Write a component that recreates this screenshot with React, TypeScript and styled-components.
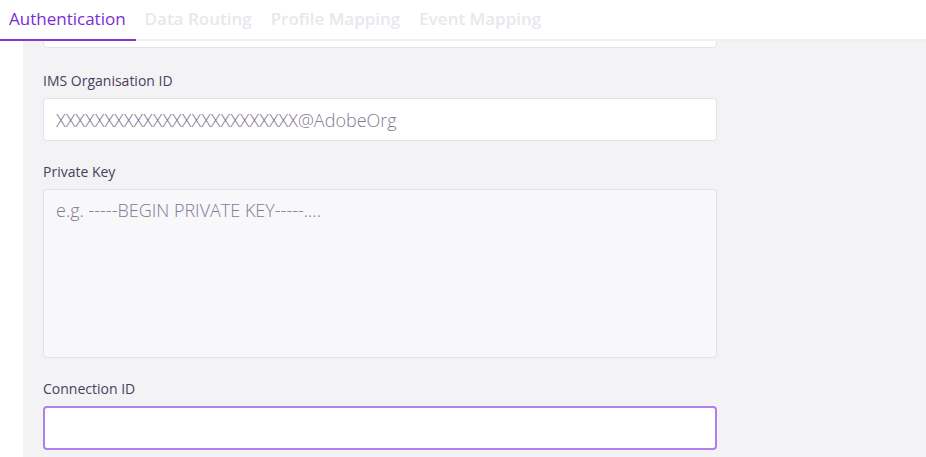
import { createGlobalStyle, styled } from 'styled-components';

const GlobalStyle = createGlobalStyle`
  html, body {
    margin: 0;
    padding: 0;
    background: #ffffff;
    font-family: "Open Sans", "Noto Sans", sans-serif;
  }
  * {
    box-sizing: border-box;
  }
`;

const tabs = ['Authentication', 'Data Routing', 'Profile Mapping', 'Event Mapping'];

const App = () => {
  return (
    <Page>
      <GlobalStyle />
      <TabBar>
        {tabs.map((tab, i) => (
          <Tab key={tab} $active={i === 0}>
            {tab}
          </Tab>
        ))}
      </TabBar>
      <Body>
        <Panel>
          <Form>
            <TopInput readOnly />
            <Field>
              <Label>IMS Organisation ID</Label>
              <TextInput placeholder="XXXXXXXXXXXXXXXXXXXXXXXXX@AdobeOrg" />
            </Field>
            <Field>
              <Label>Private Key</Label>
              <TextArea placeholder="e.g. -----BEGIN PRIVATE KEY-----...." />
            </Field>
            <Field>
              <Label>Connection ID</Label>
              <TextInput $focused />
            </Field>
          </Form>
        </Panel>
      </Body>
    </Page>
  );
};

const Page = styled.div`
  width: 926px;
  height: 457px;
  overflow: hidden;
  display: flex;
  flex-direction: column;
`;

const TabBar = styled.div`
  display: flex;
  height: 41px;
  border-bottom: 2px solid #efeef2;
  flex-shrink: 0;
`;

const Tab = styled.div<{ $active?: boolean }>`
  padding: 7px 10px 0 9px;
  margin-bottom: -2px;
  font-size: 17px;
  font-weight: ${(p) => (p.$active ? 500 : 600)};
  color: ${(p) => (p.$active ? '#7a2dd4' : '#e9e7ed')};
  border-bottom: 2px solid ${(p) => (p.$active ? '#8136d6' : 'transparent')};
  white-space: nowrap;
`;

const Body = styled.div`
  flex: 1;
  display: flex;
  padding-left: 23px;
  min-height: 0;
`;

const Panel = styled.div`
  flex: 1;
  background: #f3f2f5;
  overflow: hidden;
  padding-left: 20px;
`;

const Form = styled.div`
  width: 674px;
  display: flex;
  flex-direction: column;
  gap: 21px;
  margin-top: -36px;
`;

const Field = styled.div`
  display: flex;
  flex-direction: column;
  gap: 7px;
`;

const Label = styled.label`
  font-size: 14px;
  line-height: 20px;
  font-weight: 500;
  color: #4a3f5b;
`;

const TextInput = styled.input<{ $focused?: boolean }>`
  height: ${(p) => (p.$focused ? '44px' : '43px')};
  width: 100%;
  padding: 0 12px;
  background: #ffffff;
  border: ${(p) => (p.$focused ? '2px solid #b57cf0' : '1px solid #e4e2e8')};
  border-radius: 4px;
  font-family: "Open Sans", "Noto Sans", sans-serif;
  font-size: 18px;
  font-weight: 300;
  color: #4a3f5b;
  outline: none;
  &::placeholder {
    color: #857a93;
  }
`;

const TopInput = styled(TextInput)`
  margin-bottom: 2px;
`;

const TextArea = styled.textarea`
  height: 169px;
  width: 100%;
  padding: 8px 12px;
  background: #f8f7fa;
  border: 1px solid #e4e2e8;
  border-radius: 4px;
  resize: none;
  font-family: "Open Sans", "Noto Sans", sans-serif;
  font-size: 18px;
  font-weight: 300;
  color: #4a3f5b;
  outline: none;
  &::placeholder {
    color: #857a93;
  }
`;

export default App;
